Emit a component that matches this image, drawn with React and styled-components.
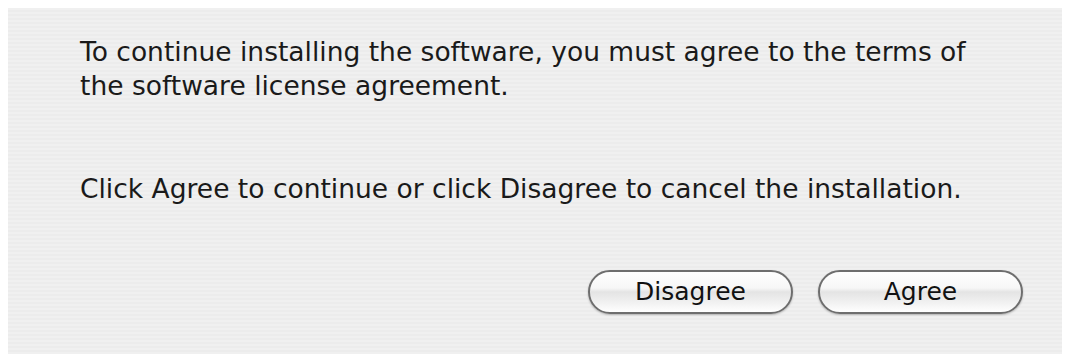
import React from "react";
import styled, { createGlobalStyle } from "styled-components";

const Global = createGlobalStyle`
  html, body { margin: 0; padding: 0; background: #ffffff; }
  body { width: 1068px; height: 359px; overflow: hidden; }
`;

const Page = styled.div`
  padding: 8px 6px 5px 8px;
  box-sizing: border-box;
  width: 1068px;
  height: 359px;
`;

const Panel = styled.div`
  box-sizing: border-box;
  height: 100%;
  padding: 27px 39px 40px 72px;
  display: flex;
  flex-direction: column;
  background: repeating-linear-gradient(
    to bottom,
    #f0f0f0 0px,
    #f0f0f0 2px,
    #ececec 2px,
    #ececec 4px
  );
  font-family: "DejaVu Sans", "Open Sans", sans-serif;
  color: #1a1a1a;
`;

const Message = styled.p`
  margin: 0;
  font-size: 26.5px;
  line-height: 34px;
  white-space: nowrap;
  margin-top: ${(p) => p.$gap || 0}px;
`;

const ButtonRow = styled.div`
  margin-top: auto;
  display: flex;
  justify-content: flex-end;
  gap: 25px;
`;

const PillButton = styled.button`
  box-sizing: border-box;
  width: 205px;
  height: 44px;
  border-radius: 22px;
  border: 2px solid #6e6e6e;
  background: linear-gradient(
    to bottom,
    #ffffff 0%,
    #f7f7f7 40%,
    #e4e4e4 50%,
    #f2f2f2 78%,
    #ffffff 100%
  );
  box-shadow: 0 1px 2px rgba(0, 0, 0, 0.25);
  font-family: "DejaVu Sans", "Open Sans", sans-serif;
  font-size: 25px;
  color: #111;
  padding: 0 0 2px;
  display: flex;
  align-items: center;
  justify-content: center;
`;

export default function App() {
  return (
    <>
      <Global />
      <Page>
        <Panel>
          <Message>
            To continue installing the software, you must agree to the terms of
            <br />
            the software license agreement.
          </Message>
          <Message $gap={69}>
            Click Agree to continue or click Disagree to cancel the installation.
          </Message>
          <ButtonRow>
            <PillButton>Disagree</PillButton>
            <PillButton>Agree</PillButton>
          </ButtonRow>
        </Panel>
      </Page>
    </>
  );
}
